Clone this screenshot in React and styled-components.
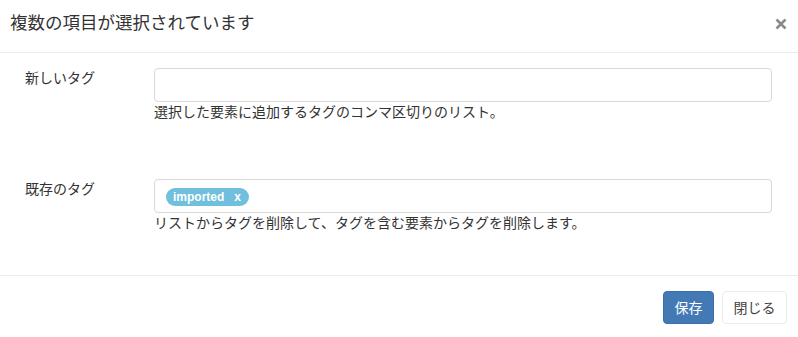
import React from "react";
import styled, { createGlobalStyle } from "styled-components";

const Global = createGlobalStyle`
  html, body { margin: 0; padding: 0; background: #fff; }
  body {
    font-family: "Liberation Sans", "Noto Sans CJK JP", sans-serif;
    font-size: 14px;
    color: #333;
    line-height: 20px;
  }
  * { box-sizing: border-box; }
`;

const Modal = styled.div`
  width: 798px;
  height: 337px;
  background: #fff;
  display: flex;
  flex-direction: column;
`;

const Header = styled.div`
  height: 53px;
  padding: 11px 11px 0 10px;
  border-bottom: 1px solid #ebebeb;
  display: flex;
  align-items: flex-start;
  justify-content: space-between;
`;

const Title = styled.h4`
  margin: 0;
  font-size: 17.5px;
  line-height: 25px;
  font-weight: normal;
  color: #333;
`;

const CloseBtn = styled.button`
  border: 0;
  background: none;
  padding: 0;
  margin-top: 7px;
  width: 12px;
  height: 12px;
  display: flex;
  cursor: pointer;
`;

const Body = styled.div`
  flex: 1;
  padding: 15px 26px 0 25px;
  display: flex;
  flex-direction: column;
  gap: 57px;
  border-bottom: 1px solid #ebebeb;
`;

const Group = styled.div`
  display: grid;
  grid-template-columns: 129px 1fr;
`;

const Label = styled.label`
  line-height: 20px;
  color: #333;
`;

const Field = styled.div`
  display: flex;
  flex-direction: column;
`;

const Input = styled.div`
  height: 34px;
  border: 1px solid #d9d9d9;
  border-radius: 4px;
  padding: 8px 11px;
  display: flex;
  align-items: flex-start;
`;

const Help = styled.div`
  margin-top: 0;
  line-height: 20px;
  color: #333;
`;

const Tag = styled.span`
  display: inline-flex;
  align-items: center;
  gap: 10px;
  height: 18px;
  padding: 0 8px 0 7px;
  border-radius: 9px;
  background: #70bfdd;
  color: #fff;
  font-family: "Liberation Sans", sans-serif;
  font-weight: bold;
  font-size: 12px;
  line-height: 18px;
`;

const Footer = styled.div`
  height: 61px;
  padding: 15px 11px 0 0;
  display: flex;
  justify-content: flex-end;
  gap: 8px;
`;

const Button = styled.button`
  height: 33px;
  padding: 0 10.5px;
  border-radius: 4px;
  font-family: "Liberation Sans", "Noto Sans CJK JP", sans-serif;
  font-size: 14px;
  line-height: 20px;
  border: 1px solid ${(p) => (p.$primary ? "#3c6fa8" : "#ececec")};
  background: ${(p) => (p.$primary ? "#437ab5" : "#fff")};
  color: ${(p) => (p.$primary ? "#fff" : "#444")};
  cursor: pointer;
`;

export default function App() {
  return (
    <>
      <Global />
      <Modal>
        <Header>
          <Title>複数の項目が選択されています</Title>
          <CloseBtn aria-label="close">
            <svg width="12" height="12" viewBox="0 0 12 12">
              <path d="M1.5 1.5 L10.5 10.5 M10.5 1.5 L1.5 10.5" stroke="#8a8a8a" strokeWidth="2.6" strokeLinecap="butt" />
            </svg>
          </CloseBtn>
        </Header>
        <Body>
          <Group>
            <Label>新しいタグ</Label>
            <Field>
              <Input />
              <Help>選択した要素に追加するタグのコンマ区切りのリスト。</Help>
            </Field>
          </Group>
          <Group>
            <Label>既存のタグ</Label>
            <Field>
              <Input>
                <Tag>
                  <span>imported</span>
                  <span>x</span>
                </Tag>
              </Input>
              <Help>リストからタグを削除して、タグを含む要素からタグを削除します。</Help>
            </Field>
          </Group>
        </Body>
        <Footer>
          <Button $primary>保存</Button>
          <Button>閉じる</Button>
        </Footer>
      </Modal>
    </>
  );
}
